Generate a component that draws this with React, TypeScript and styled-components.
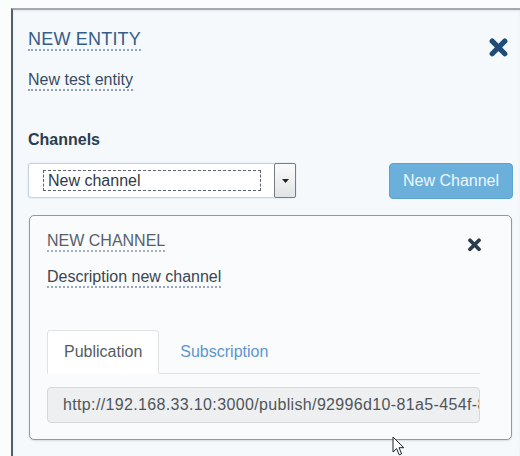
import React from 'react'
import styled, { createGlobalStyle } from 'styled-components'

const GlobalStyle = createGlobalStyle`
  html, body {
    margin: 0;
    padding: 0;
    background: #fbfcfc;
    overflow: hidden;
  }
  body {
    font-family: "Liberation Sans", Arial, sans-serif;
  }
`

const CloseIcon = ({ size, color }: { size: number; color: string }) => (
  <svg width={size} height={size * 0.9} viewBox="0 0 20 18">
    <path d="M4 3 L16 15 M16 3 L4 15" stroke={color} strokeWidth={5} strokeLinecap="round" />
  </svg>
)

const Cursor = () => (
  <svg width="14" height="21" viewBox="0 0 14 21">
    <path
      d="M1 1 L1 16 L4.6 12.6 L7.2 18.8 L9.6 17.8 L7 11.7 L11.8 11.7 Z"
      fill="#fff"
      stroke="#222"
      strokeWidth="1"
      strokeLinejoin="round"
    />
  </svg>
)

const App = () => {
  return (
    <>
      <GlobalStyle />
      <Page>
        <Modal>
          <HeaderRow>
            <Title>NEW ENTITY</Title>
            <CloseButton top={9} right={4}>
              <CloseIcon size={21} color="#1f4d78" />
            </CloseButton>
          </HeaderRow>
          <Editable>New test entity</Editable>

          <Label>Channels</Label>
          <ChannelRow>
            <SelectBox>
              <SelectValue>New channel</SelectValue>
              <SelectArrow>
                <svg width="7" height="4" viewBox="0 0 7 4">
                  <path d="M0 0 L7 0 L3.5 4 Z" fill="#222" />
                </svg>
              </SelectArrow>
            </SelectBox>
            <PrimaryButton>New Channel</PrimaryButton>
          </ChannelRow>

          <ChannelPanel>
            <HeaderRow>
              <SubTitle>NEW CHANNEL</SubTitle>
              <CloseButton top={6} right={-2}>
                <CloseIcon size={15} color="#2d3c4c" />
              </CloseButton>
            </HeaderRow>
            <SubEditable>Description new channel</SubEditable>

            <Tabs>
              <Tab active>Publication</Tab>
              <Tab>Subscription</Tab>
            </Tabs>
            <UrlField>http://192.168.33.10:3000/publish/92996d10-81a5-454f-8c2e-4b1f0a7d93e2</UrlField>
          </ChannelPanel>
        </Modal>
        <Pointer>
          <Cursor />
        </Pointer>
      </Page>
    </>
  )
}

export default App

const Page = styled.div`
  position: relative;
  width: 520px;
  height: 456px;
  padding-top: 8px;
  box-sizing: border-box;
`
const Modal = styled.div`
  margin-left: 11px;
  height: 448px;
  box-sizing: border-box;
  padding: 19px 7px 0 15px;
  background: #f6f9fc;
  border-top: 2px solid #a3a9ae;
  border-left: 2px solid #535c67;
  box-shadow: inset 0 1px 2px rgba(0, 0, 0, 0.08);
`
const HeaderRow = styled.div`
  display: flex;
  justify-content: space-between;
  align-items: flex-start;
  height: 22px;
`
const CloseButton = styled.div<{ top: number; right: number }>`
  display: flex;
  margin-top: ${p => p.top}px;
  margin-right: ${p => p.right}px;
`
const Title = styled.span`
  font-size: 18px;
  line-height: 20px;
  letter-spacing: 0.2px;
  color: #345d88;
  border-bottom: 2px dotted #8ea8c6;
`
const Editable = styled.div`
  width: fit-content;
  margin-top: 20px;
  font-size: 16px;
  line-height: 18px;
  color: #394b64;
  border-bottom: 2px dotted #8ea0bb;
`
const Label = styled.div`
  margin-top: 40px;
  font-size: 16px;
  line-height: 18px;
  font-weight: bold;
  color: #2b3d50;
`
const ChannelRow = styled.div`
  display: flex;
  justify-content: space-between;
  align-items: flex-start;
  margin-top: 14px;
`
const SelectBox = styled.div`
  display: flex;
  align-items: stretch;
  width: 268px;
  height: 35px;
  box-sizing: border-box;
  background: #fff;
  border: 1px solid #c3d4e6;
  border-radius: 3px;
  box-shadow: 0 0 2px rgba(120, 160, 200, 0.35);
`
const SelectValue = styled.div`
  width: 218px;
  margin: 6px 0 6px 14px;
  box-sizing: border-box;
  padding-left: 4px;
  border: 1px dashed #5c6470;
  font-size: 16px;
  line-height: 19px;
  color: #2e3a48;
`
const SelectArrow = styled.div`
  display: flex;
  align-items: center;
  justify-content: center;
  margin: -1px -1px -1px auto;
  width: 22px;
  box-sizing: border-box;
  border: 1px solid #737b85;
  border-radius: 2px;
  background: linear-gradient(#fbfbfb, #e2e3e5);
`
const PrimaryButton = styled.div`
  width: 124px;
  height: 36px;
  box-sizing: border-box;
  display: flex;
  align-items: center;
  justify-content: center;
  font-size: 16px;
  color: #eef6fc;
  background: #6bb0da;
  border: 1px solid #5da3cf;
  border-radius: 4px;
`
const ChannelPanel = styled.div`
  margin: 16px 1px 0 1px;
  padding: 16px 31px 16px 17px;
  background: #f9fbfd;
  border: 1px solid #8b9e9b;
  border-radius: 5px;
  box-shadow: 0 1px 2px rgba(0, 0, 0, 0.12);
`
const SubTitle = styled.span`
  font-size: 16px;
  line-height: 18px;
  color: #56606b;
  border-bottom: 2px dotted #a3b0bf;
`
const SubEditable = styled.div`
  width: fit-content;
  margin-top: 14px;
  font-size: 16px;
  line-height: 18px;
  color: #3c4652;
  border-bottom: 2px dotted #97a6b8;
`
const Tabs = styled.div`
  display: flex;
  gap: 4px;
  margin-top: 42px;
  border-bottom: 1px solid #dfe3e6;
`
const Tab = styled.div<{ active?: boolean }>`
  margin-bottom: -1px;
  padding: 12px 16px;
  font-size: 16px;
  line-height: 18px;
  color: ${p => (p.active ? '#555c63' : '#5f95cd')};
  background: ${p => (p.active ? '#fff' : 'transparent')};
  border: 1px solid ${p => (p.active ? '#e0e3e6' : 'transparent')};
  border-bottom-color: transparent;
  border-radius: 4px 4px 0 0;
`
const UrlField = styled.div`
  margin-top: 13px;
  height: 36px;
  box-sizing: border-box;
  padding: 0 15px;
  display: flex;
  align-items: center;
  overflow: hidden;
  white-space: nowrap;
  font-size: 16px;
  letter-spacing: 0.35px;
  color: #4f555b;
  background: #eeeff0;
  border: 1px solid #d6d9dc;
  border-radius: 4px;
`
const Pointer = styled.div`
  position: absolute;
  left: 392px;
  top: 436px;
`
